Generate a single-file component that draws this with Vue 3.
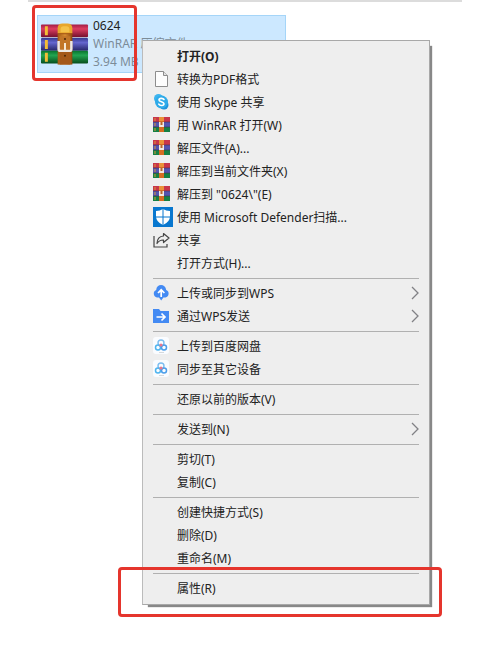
<template>
  <main class="explorer">
    <div class="file" :class="{ selected: isSelected }" @click="isSelected = true">
      <svg class="file-icon" viewBox="0 0 50 42">
        <defs>
          <linearGradient id="book-red" x1="0" y1="0" x2="0" y2="1">
            <stop offset="0" stop-color="#a01c45" />
            <stop offset="0.35" stop-color="#dc3d60" />
            <stop offset="1" stop-color="#74102e" />
          </linearGradient>
          <linearGradient id="book-blue" x1="0" y1="0" x2="0" y2="1">
            <stop offset="0" stop-color="#373b91" />
            <stop offset="0.35" stop-color="#6466cf" />
            <stop offset="1" stop-color="#252567" />
          </linearGradient>
          <linearGradient id="book-green" x1="0" y1="0" x2="0" y2="1">
            <stop offset="0" stop-color="#08752e" />
            <stop offset="0.35" stop-color="#22a551" />
            <stop offset="1" stop-color="#064d1c" />
          </linearGradient>
          <linearGradient id="strap" x1="0" y1="0" x2="1" y2="0">
            <stop offset="0" stop-color="#a25a14" />
            <stop offset="0.5" stop-color="#d98b32" />
            <stop offset="1" stop-color="#8c470d" />
          </linearGradient>
        </defs>
        <rect x="1" y="1" width="48" height="13" rx="1" fill="url(#book-red)" />
        <rect x="1" y="15" width="48" height="13" rx="1" fill="url(#book-blue)" />
        <rect x="1" y="28" width="48" height="13" rx="1" fill="url(#book-green)" />
        <path d="M6.500 3v9M6.500 17v9M6.500 30v9" stroke="#f4bd36" stroke-width="3" />
        <path d="M18 42V10h15v32z" fill="url(#strap)" />
        <path d="M18 10V5q0-5 5-5h5q5 0 5 5v5z" fill="#e8a62c" />
        <path d="M21 9V6q0-3 3-3h3q3 0 3 3v3" fill="#f5c24a" />
        <path d="M18 10.500h15" stroke="#a75b12" />
        <path d="M20 13h11v13q-5.500 3-11 0z" fill="#c27628" />
        <path d="M20 29h11v13H20z" fill="#a4581a" />
        <path d="M19 18v8q0 2 2 2h9q2 0 2-2v-8" fill="none" stroke="#ece8e6" stroke-width="2.500" />
        <path d="M25.500 20v8" stroke="#f6ead8" stroke-width="2" />
        <circle cx="25.500" cy="16" r="1" fill="#4b2505" />
        <circle cx="25.500" cy="33" r="1" fill="#4b2505" />
      </svg>
      <div class="file-info">
        <span class="file-name">0624</span>
        <span>WinRAR 压缩文件</span>
        <span>3.94 MB</span>
      </div>
      <span class="mark mark-file"></span>
    </div>

    <div class="menu" role="menu">
      <div v-for="(group, index) in groups" :key="index" class="menu-group">
        <button v-for="item in group" :key="item.label" type="button" role="menuitem"
                class="menu-item" :class="{ 'menu-item-default': item.isDefault }">
          <span class="item-icon">
            <svg v-if="item.icon === 'page'" viewBox="0 0 20 20">
              <path d="M2.500 2.500h8l4 4v11h-12z" fill="#fdfdfd" stroke="#8d8d8d" />
              <path d="M10.500 2.500v4h4" fill="#e4e4e4" stroke="#8d8d8d" />
            </svg>
            <svg v-else-if="item.icon === 'skype'" viewBox="0 0 20 20">
              <circle cx="5.500" cy="6.500" r="4.500" fill="#3cb4ef" />
              <circle cx="11" cy="13" r="4.500" fill="#1e93dd" />
              <circle cx="8.500" cy="10" r="6.500" fill="#2fabe9" />
              <path d="M11 7.500C10 5.800 6 6 6 8s5 1.700 5 3.800-4 2.400-5.200.4" fill="none" stroke="#fff" stroke-width="1.600" stroke-linecap="round" />
            </svg>
            <svg v-else-if="item.icon === 'rar'" viewBox="0 0 20 20">
              <path d="M0 2h17v5H0z" fill="#c8364a" />
              <path d="M0 7h17v5H0z" fill="#5354b0" />
              <path d="M0 12h17v5H0z" fill="#158044" />
              <path d="M0 7h17M0 12h17" stroke="#42304d" stroke-width="0.600" />
              <path d="M2 3v3M2 8v3M2 13v3" stroke="#d99735" />
              <path d="M6 2h5v15H6z" fill="#d66c22" />
              <path d="M6 2h5v4H6z" fill="#eb9138" />
              <path d="M6 7h5v5H6z" fill="#f1e8df" />
              <path d="M7.500 7h2v3h-2z" fill="#b7652f" />
            </svg>
            <svg v-else-if="item.icon === 'shield'" viewBox="0 0 20 20">
              <path d="M0 0h20v20H0z" fill="#0877cf" />
              <path d="M10 2q3 2 7 2v5q0 6-7 9-7-3-7-9V4q4 0 7-2z" fill="#fff" />
              <path d="M10 2v16M3 10h14" stroke="#0877cf" />
            </svg>
            <svg v-else-if="item.icon === 'share'" viewBox="0 0 20 20">
              <path d="M1 6v11h13v-3" fill="none" stroke="#444" stroke-width="1.200" />
              <path d="M10.500 3.500l5.500 4.500-5.500 4.500V10q-4-.2-6.500 3.500.2-7 6.500-7.500z" fill="none" stroke="#444" stroke-width="1.200" stroke-linejoin="round" />
            </svg>
            <svg v-else-if="item.icon === 'cloud'" viewBox="0 0 20 20">
              <path d="M4 14.500a4 4 0 0 1-.8-7.600C3.500.5 12.500.5 13.200 6.900a4 4 0 0 1-.8 7.600h-2L8.200 17.500l-2.200-3z" fill="#438af3" />
              <path d="M8.200 14V7M5 10l3.200-3.200L11.400 10" fill="none" stroke="#fff" stroke-width="1.700" />
            </svg>
            <svg v-else-if="item.icon === 'folder'" viewBox="0 0 20 20">
              <path d="M0 3h6l1.500 2H16v12H0z" fill="#438af3" />
              <path d="M3.500 11h8M8.500 7.500L12 11l-3.500 3.500" fill="none" stroke="#fff" stroke-width="1.700" />
            </svg>
            <svg v-else-if="item.icon === 'netdisk'" viewBox="0 0 20 20">
              <rect x="0" y="1" width="16" height="17" rx="3" fill="#fafcff" />
              <circle cx="8" cy="7" r="3" fill="none" stroke="#7cbdf0" stroke-width="1.400" />
              <circle cx="5" cy="11.500" r="2.500" fill="none" stroke="#4fb5ef" stroke-width="1.500" />
              <circle cx="11" cy="11.500" r="2.500" fill="none" stroke="#4c9eea" stroke-width="1.500" />
              <circle cx="8" cy="9" r="1.600" fill="#e9778d" />
              <path d="M6 16.500h5" stroke="#d4d9de" />
            </svg>
          </span>
          <span class="item-label">{{ item.label }}</span>
          <svg v-if="item.hasSubmenu" class="item-arrow" viewBox="0 0 8 14">
            <path d="M1 1l6 6-6 6" fill="none" stroke="#818185" stroke-width="1.300" />
          </svg>
          <span v-if="item.isMarked" class="mark mark-item"></span>
        </button>
      </div>
    </div>
  </main>
</template>

<script setup>
import { ref } from 'vue'

const isSelected = ref(true)

const groups = [
  [
    { label: '打开(O)', isDefault: true },
    { label: '转换为PDF格式', icon: 'page' },
    { label: '使用 Skype 共享', icon: 'skype' },
    { label: '用 WinRAR 打开(W)', icon: 'rar' },
    { label: '解压文件(A)...', icon: 'rar' },
    { label: '解压到当前文件夹(X)', icon: 'rar' },
    { label: '解压到 "0624\\"(E)', icon: 'rar' },
    { label: '使用 Microsoft Defender扫描...', icon: 'shield' },
    { label: '共享', icon: 'share' },
    { label: '打开方式(H)...' }
  ],
  [
    { label: '上传或同步到WPS', icon: 'cloud', hasSubmenu: true },
    { label: '通过WPS发送', icon: 'folder', hasSubmenu: true }
  ],
  [
    { label: '上传到百度网盘', icon: 'netdisk' },
    { label: '同步至其它设备', icon: 'netdisk' }
  ],
  [{ label: '还原以前的版本(V)' }],
  [{ label: '发送到(N)', hasSubmenu: true }],
  [
    { label: '剪切(T)' },
    { label: '复制(C)' }
  ],
  [
    { label: '创建快捷方式(S)' },
    { label: '删除(D)' },
    { label: '重命名(M)' }
  ],
  [{ label: '属性(R)', isMarked: true }]
]
</script>

<style>
body {
  margin: 0;
  background: #fff;
}
</style>

<style scoped>
.explorer {
  position: relative;
  box-sizing: border-box;
  min-height: 100vh;
  margin: 0 27px 0 28px;
  padding: 13px 9px;
  border-top: 2px solid #dcdcdc;
  font-family: "Noto Sans", "Noto Sans CJK SC", sans-serif;
  font-size: 12px;
  color: #222;
}

.file {
  position: relative;
  display: flex;
  align-items: center;
  gap: 4px;
  box-sizing: border-box;
  width: 249px;
  height: 58px;
  padding: 0 2px;
  border: 1px solid transparent;
}

.file.selected {
  background: #cce8ff;
  border-color: #a5d5f8;
}

.file-icon {
  flex: none;
  width: 49px;
  height: 42px;
}

.file-info {
  display: flex;
  flex-direction: column;
  line-height: 18px;
  color: #7c8c98;
}

.file-name {
  color: #222;
}

.menu {
  position: absolute;
  top: 38px;
  left: 114px;
  right: 32px;
  padding: 3px 0 5px;
  background: #eee;
  border: 1px solid #a8a8a8;
  border-left-color: #bbb;
  box-shadow: 4px 4px 1px -2px #888;
}

.menu-group + .menu-group::before {
  content: '';
  display: block;
  height: 1px;
  margin: 4px 10px 2px;
  background: #b0b0b0;
}

.menu-item {
  position: relative;
  display: flex;
  align-items: center;
  width: 100%;
  height: 23px;
  padding: 0 10px;
  border: none;
  background: none;
  font: inherit;
  color: inherit;
  text-align: left;
}

.menu-item:hover {
  background: #fff;
}

.menu-item-default {
  font-weight: 700;
}

.item-icon {
  flex: none;
  width: 20px;
  height: 20px;
  margin-right: 4px;
}

.item-icon svg {
  display: block;
}

.item-label {
  flex: 1;
  white-space: nowrap;
}

.item-arrow {
  width: 8px;
  height: 14px;
}

.mark {
  position: absolute;
  z-index: 1;
  border: 3px solid #e5352d;
  border-radius: 4px;
  pointer-events: none;
}

.mark-file {
  inset: -11px 148px -9px -6px;
}

.mark-item {
  inset: -9px -13px -18px -25px;
}
</style>
